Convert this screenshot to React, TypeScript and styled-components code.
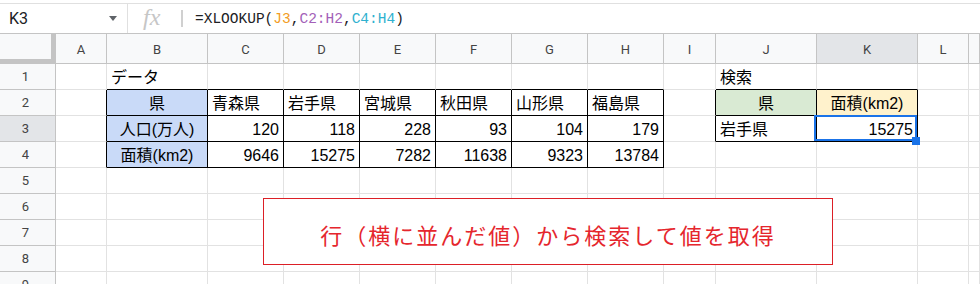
import React from "react";
import styled, { createGlobalStyle } from "styled-components";

const GlobalStyle = createGlobalStyle`
  html, body {
    margin: 0;
    padding: 0;
    background: #fff;
  }
`;

const BLUE = "#c9daf8";
const GREEN = "#d9ead3";
const YELLOW = "#fff2cc";
const GRID = "#e2e2e2";
const HEAD_LINE = "#c4c4c4";

const COLS = ["A", "B", "C", "D", "E", "F", "G", "H", "I", "J", "K", "L", ""];
const ROWS = [1, 2, 3, 4, 5, 6, 7, 8, 9];

type Align = "left" | "center" | "right";
type CellDef = { v: string; align?: Align; bg?: string };

const cells: Record<string, CellDef> = {};
const put = (r: number, c: number, values: (string | number)[], extra: Partial<CellDef> = {}) =>
  values.forEach((v, i) => {
    cells[`${r},${c + i}`] = {
      v: String(v),
      align: typeof v === "number" ? "right" : "left",
      ...extra,
    };
  });

put(1, 1, ["データ"]);
put(2, 1, ["県"], { align: "center", bg: BLUE });
put(2, 2, ["青森県", "岩手県", "宮城県", "秋田県", "山形県", "福島県"]);
put(3, 1, ["人口(万人)"], { align: "center", bg: BLUE });
put(3, 2, [120, 118, 228, 93, 104, 179]);
put(4, 1, ["面積(km2)"], { align: "center", bg: BLUE });
put(4, 2, [9646, 15275, 7282, 11638, 9323, 13784]);
put(1, 9, ["検索"]);
put(2, 9, ["県"], { align: "center", bg: GREEN });
put(2, 10, ["面積(km2)"], { align: "center", bg: YELLOW });
put(3, 9, ["岩手県"]);
put(3, 10, [15275]);

const boxed = (r: number, c: number) =>
  (r >= 2 && r <= 4 && c >= 1 && c <= 7) || (r >= 2 && r <= 3 && c >= 9 && c <= 10);

const SEL_ROW = 3;
const SEL_COL = 10;

export default function App() {
  return (
    <Page>
      <GlobalStyle />
      <FormulaBar>
        <NameBox>
          <span>K3</span>
          <svg width="8" height="5" viewBox="0 0 8 5">
            <path d="M0 0h8L4 5z" fill="#5f6368" />
          </svg>
        </NameBox>
        <FxIcon>fx</FxIcon>
        <BarSeparator />
        <Formula>
          =XLOOKUP(<Ref $color="#f29c24">J3</Ref>,<Ref $color="#a35fb8">C2:H2</Ref>,
          <Ref $color="#2fb1cf">C4:H4</Ref>)
        </Formula>
      </FormulaBar>

      <Sheet>
        <Corner />
        {COLS.map((name, c) => (
          <ColHeader key={c} $active={c === SEL_COL}>
            {name}
          </ColHeader>
        ))}
        {ROWS.map((r) => (
          <React.Fragment key={r}>
            <RowHeader $active={r === SEL_ROW}>{r}</RowHeader>
            {COLS.map((_, c) => {
              const def = cells[`${r},${c}`];
              const right = boxed(r, c) || boxed(r, c + 1) ? "#000" : GRID;
              const bottom = boxed(r, c) || boxed(r + 1, c) ? "#000" : GRID;
              return (
                <Cell
                  key={c}
                  $align={def?.align ?? "left"}
                  $bg={def?.bg}
                  $right={right}
                  $bottom={bottom}
                >
                  {def?.v}
                  {r === SEL_ROW && c === SEL_COL && (
                    <Selection>
                      <FillHandle />
                    </Selection>
                  )}
                </Cell>
              );
            })}
          </React.Fragment>
        ))}
      </Sheet>

      <TextBox>行（横に並んだ値）から検索して値を取得</TextBox>
    </Page>
  );
}

const Page = styled.div`
  position: relative;
  width: 980px;
  height: 284px;
  overflow: hidden;
  background: #fff;
`;

const FormulaBar = styled.div`
  box-sizing: border-box;
  margin-top: 3px;
  height: 31px;
  display: flex;
  align-items: center;
  border-top: 1px solid #e0e0e0;
  border-bottom: 1px solid ${HEAD_LINE};
  font-family: Roboto, "Liberation Sans", sans-serif;
`;

const NameBox = styled.div`
  box-sizing: border-box;
  width: 128px;
  height: 100%;
  display: flex;
  align-items: center;
  justify-content: space-between;
  padding: 0 10px 0 9px;
  border-right: 1px solid #e0e0e0;
  font-size: 16px;
  color: #202124;
`;

const FxIcon = styled.div`
  margin-left: 15px;
  width: 24px;
  font-family: "Liberation Serif", serif;
  font-style: italic;
  font-size: 24px;
  line-height: 1;
  color: #c6c6c6;
  margin-top: -3px;
`;

const BarSeparator = styled.div`
  margin-left: 14px;
  width: 2px;
  height: 17px;
  background: #d0d0d0;
`;

const Formula = styled.div`
  margin-left: 12px;
  font-family: "Liberation Mono", "DejaVu Sans Mono", monospace;
  font-size: 14.5px;
  color: #202124;
  white-space: nowrap;
`;

const Ref = styled.span<{ $color: string }>`
  color: ${(p) => p.$color};
`;

const Sheet = styled.div`
  display: grid;
  grid-template-columns: 56px 51px 101px repeat(6, 76px) 52px 101px 101px 51px 1fr;
  grid-template-rows: 30px repeat(9, 26px);
`;

const Corner = styled.div`
  box-sizing: border-box;
  background: #f8f9fa;
  border-right: 5px solid ${HEAD_LINE};
  border-bottom: 5px solid ${HEAD_LINE};
`;

const ColHeader = styled.div<{ $active?: boolean }>`
  box-sizing: border-box;
  display: flex;
  align-items: center;
  justify-content: center;
  padding-top: 2px;
  background: ${(p) => (p.$active ? "#e3e5e8" : "#f8f9fa")};
  border-right: 1px solid ${HEAD_LINE};
  border-bottom: 1px solid ${HEAD_LINE};
  font-family: Roboto, "Liberation Sans", sans-serif;
  font-size: 13px;
  color: #444;
`;

const RowHeader = styled.div<{ $active?: boolean }>`
  box-sizing: border-box;
  display: flex;
  align-items: center;
  justify-content: center;
  padding-right: 4px;
  background: ${(p) => (p.$active ? "#e3e5e8" : "#f8f9fa")};
  border-right: 1px solid ${HEAD_LINE};
  border-bottom: 1px solid ${HEAD_LINE};
  font-family: Roboto, "Liberation Sans", sans-serif;
  font-size: 13px;
  color: #444;
`;

const Cell = styled.div<{ $align: Align; $bg?: string; $right: string; $bottom: string }>`
  position: relative;
  box-sizing: border-box;
  display: flex;
  align-items: flex-end;
  justify-content: ${(p) =>
    p.$align === "center" ? "center" : p.$align === "right" ? "flex-end" : "flex-start"};
  padding: 0 4px 2px;
  background: ${(p) => p.$bg ?? "#fff"};
  border-right: 1px solid ${(p) => p.$right};
  border-bottom: 1px solid ${(p) => p.$bottom};
  font-family: "Liberation Sans", "Noto Sans CJK JP", sans-serif;
  font-size: 16px;
  line-height: 19px;
  color: #000;
  white-space: nowrap;
`;

const Selection = styled.div`
  position: absolute;
  top: -1px;
  left: -3px;
  right: 0;
  bottom: 0;
  border: 2px solid #1a73e8;
  z-index: 2;
  pointer-events: none;
`;

const FillHandle = styled.div`
  position: absolute;
  right: -5px;
  bottom: -6px;
  width: 8px;
  height: 8px;
  background: #1a73e8;
`;

const TextBox = styled.div`
  position: absolute;
  left: 263px;
  top: 198px;
  box-sizing: border-box;
  width: 570px;
  height: 67px;
  display: flex;
  align-items: center;
  justify-content: center;
  padding-top: 4px;
  background: #fff;
  border: 1px solid #dc1f26;
  font-family: "Noto Sans CJK JP", sans-serif;
  font-size: 22px;
  letter-spacing: 2px;
  color: #e5262d;
  z-index: 3;
`;
